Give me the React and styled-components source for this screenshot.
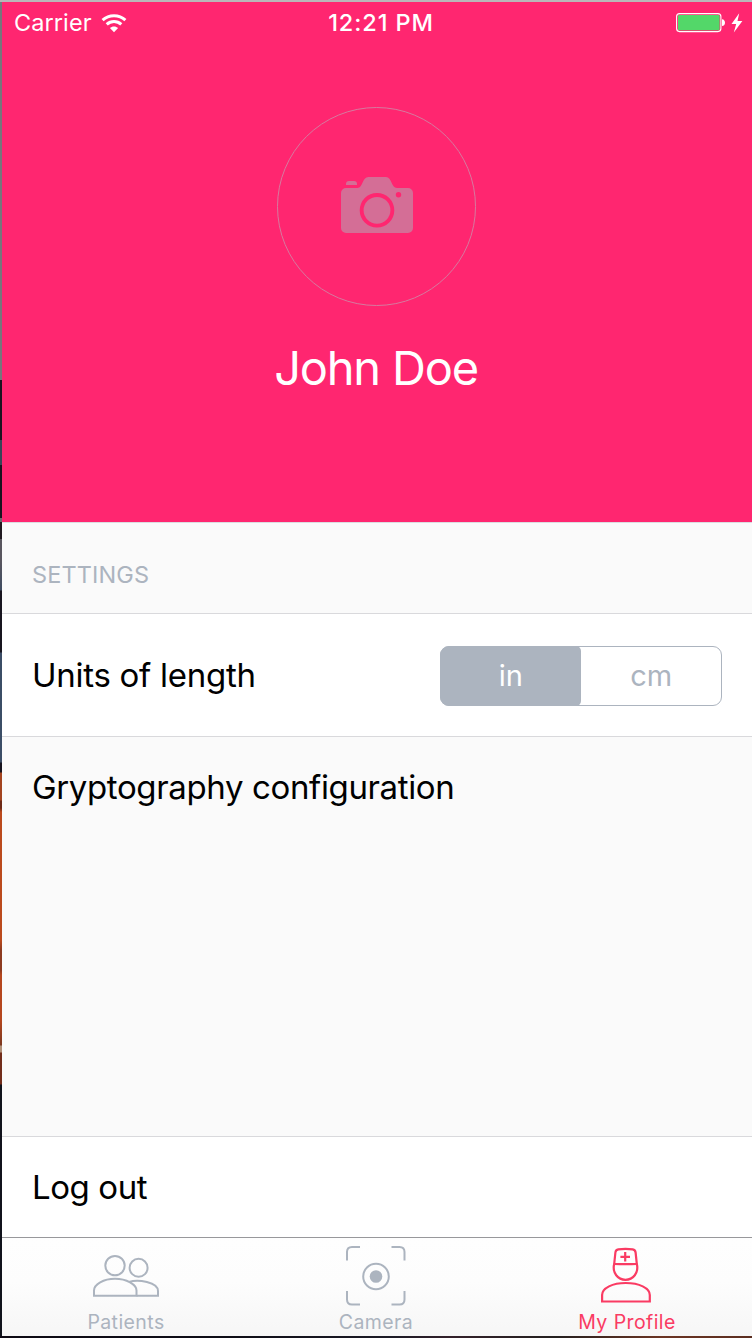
import React, { useState } from "react";
import styled, { createGlobalStyle } from "styled-components";

const Global = createGlobalStyle`
  * { box-sizing: border-box; }
  html, body { margin: 0; padding: 0; }
  body { font-family: Inter, "Liberation Sans", sans-serif; overflow: hidden; }
  button { font: inherit; border: 0; background: none; padding: 0; margin: 0; }
`;

const Desktop = styled.div`
  width: 752px;
  height: 1338px;
  padding: 2px 0 2px 2px;
  background:
    linear-gradient(#b9b6b9, #b9b6b9) 0 0 / 100% 2px no-repeat,
    linear-gradient(90deg, #0e0a14, #0e0d16 30%, #1c1b26 52%, #33202a 60%, #24201f 74%, #6b3423 88%, #5b2e20) 0 100% / 100% 2px no-repeat,
    linear-gradient(#77767c 0 380px, #1a1420 380px 440px, #384457 440px 465px, #18131f 465px 518px, #6d666d 518px 522px, #211a21 522px 539px, #59565f 539px 560px, #3f4c61 590px, #18151f 591px 652px, #3b4d66 653px 762px, #17141f 763px 772px, #a3441f 773px 800px, #6d2a17 801px 808px, #bb4a1d 812px 940px, #8d3b20 950px 970px, #b5471e 975px 1020px, #7c3820 1045px, #b09078 1046px 1052px, #722d1b 1053px 1084px, #11131c 1085px 100%) 0 0 / 2px 100% no-repeat;
`;

const Phone = styled.main`
  height: 1334px;
  display: flex;
  flex-direction: column;
  background: #fafafa;
`;

const Hero = styled.header`
  height: 520px;
  flex: none;
  display: flex;
  flex-direction: column;
  align-items: center;
  background: #ff2670;
  color: #fff;
`;

const StatusBar = styled.div`
  width: 100%;
  height: 40px;
  display: grid;
  grid-template-columns: 1fr auto 1fr;
  align-items: center;
  padding: 2px 9px 0 12px;
`;

const StatusGroup = styled.div`
  display: flex;
  align-items: center;
  justify-content: ${(p) => (p.$end ? "flex-end" : "flex-start")};
  gap: ${(p) => (p.$end ? "5px" : "9.5px")};
`;

const Label = styled.span`
  display: block;
  white-space: nowrap;
  font-size: ${(p) => p.$size}px;
  font-weight: ${(p) => p.$weight || 400};
  letter-spacing: ${(p) => p.$track || 0}px;
  line-height: ${(p) => p.$line || 1.2};
  color: ${(p) => p.$color || "inherit"};
`;

const Time = styled(Label)`
  padding-left: 5px;
`;

const Avatar = styled.button`
  width: 199px;
  height: 199px;
  margin: 65px 1px 0 0;
  border: 1px solid #d67a9f;
  border-radius: 50%;
  display: flex;
  align-items: center;
  justify-content: center;
  padding: 0 0 4px 1px;
`;

const Name = styled.h1`
  margin: 34px 2px 0 0;
  font-weight: 400;
`;

const SectionHeader = styled.div`
  height: 92px;
  flex: none;
  display: flex;
  align-items: center;
  padding: 14px 30px 0;
  border-top: 1px solid #dcdce0;
  border-bottom: 1px solid #d9d9dc;
`;

const Row = styled.div`
  height: ${(p) => p.$height}px;
  flex: none;
  display: flex;
  align-items: center;
  justify-content: space-between;
  padding: 2px 30px 0;
  background: ${(p) => p.$bg || "#fff"};
  border-bottom: ${(p) => (p.$line ? `1px solid ${p.$line}` : "0")};
`;

const Filler = styled.div`
  flex: 1;
  border-bottom: 1px solid #d9d9dc;
`;

const Segmented = styled.div`
  width: 282px;
  height: 60px;
  display: flex;
  border: 1px solid #acb4bf;
  border-radius: 9px;
`;

const Segment = styled.button`
  flex: 1;
  display: flex;
  align-items: center;
  justify-content: center;
  padding-left: 1px;
  margin: ${(p) => (p.$on ? "-1px 0 -1px -1px" : "0")};
  border-radius: ${(p) => (p.$on ? "9px 5px 5px 9px" : "0")};
  background: ${(p) => (p.$on ? "#acb4bf" : "transparent")};
  color: ${(p) => (p.$on ? "#fff" : "#acb4bf")};
`;

const TabBar = styled.nav`
  height: 99px;
  flex: none;
  display: grid;
  grid-template-columns: 248px 252px 250px;
  border-top: 1px solid #98989b;
  background: linear-gradient(#fefefe 0%, #fdfdfd 45%, #f6f6f6 100%);
`;

const Tab = styled.button`
  display: flex;
  flex-direction: column;
  align-items: center;
  gap: 3px;
  color: ${(p) => (p.$active ? "#fa3b63" : "#acb4bf")};
`;

const TabIcon = styled.svg`
  width: 76px;
  height: 70px;
  flex: none;
  fill: none;
  stroke: currentColor;
  stroke-width: ${(p) => p.$stroke || 2};
`;

const Wifi = () => (
  <svg width="26" height="20" viewBox="0 0 26 20" fill="none" stroke="#fff" strokeWidth="3">
    <path d="M1.6 7.2C8 1.1 18 1.1 24.4 7.2" />
    <path d="M5.7 11.3c4.2-3.9 10.4-3.9 14.6 0" />
    <path d="M13 19.2 8.9 15.1c2.2-2.1 6-2.1 8.2 0Z" fill="#fff" stroke="none" />
  </svg>
);

const Battery = () => (
  <svg width="50" height="20" viewBox="0 0 50 20">
    <rect x=".6" y=".6" width="44.3" height="18" rx="3" fill="none" stroke="#fff" strokeWidth="1.1" />
    <rect x="2" y="2" width="41.6" height="15.2" rx="1.2" fill="#53d769" />
    <path d="M46 6.2c4 .3 4 6.6 0 6.9Z" fill="#fff" />
  </svg>
);

const Bolt = () => (
  <svg width="12" height="20" viewBox="0 0 12 20">
    <path d="M8.2.3.5 11h4.7L2.8 19.5 11.4 8H6.5Z" fill="#fff" />
  </svg>
);

const CameraGlyph = () => (
  <svg width="72" height="56" viewBox="0 0 72 56">
    <path
      fill="#d46e96"
      fillRule="evenodd"
      d="M5 11H16.5C22 11 21 0 27.5 0H45C51 0 50 11 56 11H67a5 5 0 0 1 5 5V51a5 5 0 0 1-5 5H5a5 5 0 0 1-5-5V16a5 5 0 0 1 5-5ZM36 16a17.3 17.3 0 1 0 0 34.6A17.3 17.3 0 0 0 36 16ZM57.5 15a2.7 2.7 0 1 0 0 5.4A2.7 2.7 0 0 0 57.5 15Z"
    />
    <circle cx="36" cy="33.3" r="13.4" fill="#d46e96" />
    <path d="M5 8V7a3 3 0 0 1 3-3h5a3 3 0 0 1 3 3v1Z" fill="#d46e96" />
  </svg>
);

const PatientsIcon = () => (
  <TabIcon viewBox="88 1238 76 70">
    <circle cx="115" cy="1265.6" r="9.7" />
    <circle cx="138.6" cy="1267.8" r="9" />
    <path d="M94 1295.8v-5.3c0-6 9.5-11.7 21-11.7s21.5 5.7 21.5 11.7v5.3Z" />
    <path d="M129 1282c9-3.2 29 .2 29 9v4.8h-21.5" />
  </TabIcon>
);

const CaptureIcon = () => (
  <TabIcon viewBox="338 1238 76 70">
    <path d="M347 1260.5v-8.5q0-5 5-5h8M391.5 1247h8q5 0 5 5v8.5M347 1291v8.5q0 5 5 5h8M391.5 1304.5h8q5 0 5-5v-8.5" />
    <circle cx="376" cy="1276.5" r="12.8" />
    <circle cx="376" cy="1276.5" r="6.3" fill="currentColor" stroke="none" />
  </TabIcon>
);

const ProfileIcon = () => (
  <TabIcon viewBox="589 1238 76 70" $stroke={2.2}>
    <path d="M614.2 1263.8 615.4 1252.5q.3-2.600 2.900-3.100 7.200-1.200 14.400 0 2.600.500 2.900 3.100l1.200 11.300Q625.500 1264.600 614.200 1263.800Z" />
    <path d="M614.2 1263.8C612 1273 618 1279.800 625.500 1279.800S639 1273 636.800 1263.800" />
    <path d="M625.2 1252v9.600M620.4 1256.800h9.600" />
    <path d="M602.1 1301.500v-6.500c0-7 10.500-12 23.700-12s24 5 24 12v6.500Z" />
  </TabIcon>
);

const tabs = [
  { id: "patients", title: "Patients", Icon: PatientsIcon },
  { id: "camera", title: "Camera", Icon: CaptureIcon },
  { id: "profile", title: "My Profile", Icon: ProfileIcon },
];

export default function App() {
  const [unit, setUnit] = useState("in");
  const [tab, setTab] = useState("profile");

  return (
    <Desktop>
      <Global />
      <Phone>
        <Hero>
          <StatusBar>
            <StatusGroup>
              <Label $size={23.5} $track={0.08}>Carrier</Label>
              <Wifi />
            </StatusGroup>
            <Time $size={23.5} $weight={550} $track={0.9}>12:21 PM</Time>
            <StatusGroup $end>
              <Battery />
              <Bolt />
            </StatusGroup>
          </StatusBar>
          <Avatar aria-label="Add photo">
            <CameraGlyph />
          </Avatar>
          <Name>
            <Label $size={47} $track={-1.2}>John Doe</Label>
          </Name>
        </Hero>

        <SectionHeader>
          <Label $size={23.5} $track={0.12} $color="#acb4bf">SETTINGS</Label>
        </SectionHeader>
        <Row $height={123} $line="#d9d9dc">
          <Label $size={33} $track={-0.27} $color="#000">Units of length</Label>
          <Segmented>
            {["in", "cm"].map((u) => (
              <Segment key={u} $on={unit === u} onClick={() => setUnit(u)}>
                <Label $size={29}>{u}</Label>
              </Segment>
            ))}
          </Segmented>
        </Row>
        <Row $height={100} $bg="#fafafa">
          <Label $size={33} $track={-0.37} $color="#000">Gryptography configuration</Label>
        </Row>
        <Filler />
        <Row $height={100}>
          <Label $size={33} $track={-0.42} $color="#000">Log out</Label>
        </Row>

        <TabBar>
          {tabs.map(({ id, title, Icon }) => (
            <Tab key={id} $active={tab === id} onClick={() => setTab(id)}>
              <Icon />
              <Label $size={19.5} $track={0.42}>{title}</Label>
            </Tab>
          ))}
        </TabBar>
      </Phone>
    </Desktop>
  );
}
